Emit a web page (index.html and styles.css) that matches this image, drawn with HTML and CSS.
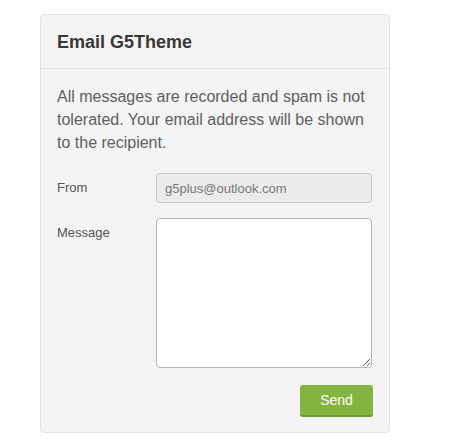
FILE: index.html
```html
<!DOCTYPE html>
<html>
<head>
<meta charset="utf-8">
<link rel="stylesheet" href="styles.css">
</head>
<body>
<div class="panel">
  <div class="panel-head">Email G5Theme</div>
  <div class="panel-body">
    <p class="intro">All messages are recorded and spam is not tolerated. Your email address will be shown to the recipient.</p>
    <div class="row">
      <label class="lbl">From</label>
      <input class="field" type="text" value="g5plus@outlook.com" disabled>
    </div>
    <div class="row">
      <label class="lbl">Message</label>
      <textarea class="area"></textarea>
    </div>
    <div class="actions">
      <button class="send">Send</button>
    </div>
  </div>
</div>
</body>
</html>
```
FILE: styles.css
```css
html, body {
  margin: 0;
  padding: 0;
  background: #ffffff;
  font-family: "Liberation Sans", Arial, sans-serif;
}
.panel {
  margin: 14px 0 0 40px;
  width: 350px;
  box-sizing: border-box;
  background: #f4f4f4;
  border: 1px solid #e1e5e9;
  border-radius: 4px;
}
.panel-head {
  height: 54px;
  box-sizing: border-box;
  padding: 16px 16px 0 16px;
  font-size: 18px;
  font-weight: bold;
  line-height: 22px;
  color: #383838;
  border-bottom: 1px solid #e1e5e9;
}
.panel-body {
  padding: 16px 17px 15px 16px;
}
.intro {
  margin: 0 0 19px 0;
  font-size: 16px;
  line-height: 23px;
  color: #606060;
}
.row {
  display: grid;
  grid-template-columns: 99px 1fr;
  margin-bottom: 15px;
}
.row + .row {
  margin-bottom: 17px;
}
.lbl {
  padding-top: 6px;
  font-size: 13px;
  line-height: 18px;
  color: #555555;
}
.field {
  height: 30px;
  box-sizing: border-box;
  margin: 0;
  padding: 0 8px;
  font-family: "Liberation Sans", Arial, sans-serif;
  font-size: 13px;
  color: #777777;
  background: #ebebeb;
  border: 1px solid #c6c6c6;
  border-radius: 4px;
}
.area {
  height: 150px;
  box-sizing: border-box;
  margin: 0;
  padding: 6px 8px;
  font-family: "Liberation Sans", Arial, sans-serif;
  font-size: 13px;
  background: #ffffff;
  border: 1px solid #b8b8b8;
  border-radius: 4px;
}
.actions {
  display: flex;
  justify-content: flex-end;
  margin-right: -1px;
}
.send {
  width: 73px;
  height: 32px;
  box-sizing: border-box;
  padding: 0;
  font-family: "Liberation Sans", Arial, sans-serif;
  font-size: 14px;
  color: #ffffff;
  background: #84b440;
  border: none;
  border-bottom: 2px solid #6e9b33;
  border-radius: 3px;
}
```
